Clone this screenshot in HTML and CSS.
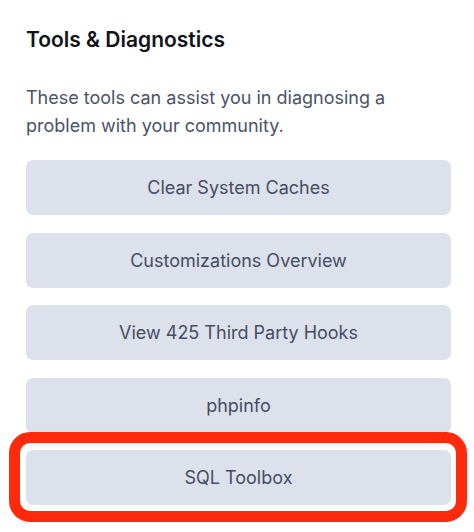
FILE: index.html
```html
<!DOCTYPE html>
<html>
<head>
<meta charset="utf-8">
<link rel="stylesheet" href="styles.css">
</head>
<body>
<section class="panel">
  <h2 class="title">Tools &amp; Diagnostics</h2>
  <p class="desc">These tools can assist you in diagnosing a problem with your community.</p>
  <div class="tools">
    <button class="tool">Clear System Caches</button>
    <button class="tool">Customizations Overview</button>
    <button class="tool">View 425 Third Party Hooks</button>
    <button class="tool">phpinfo</button>
    <div class="highlight-wrap">
      <button class="tool">SQL Toolbox</button>
      <span class="highlight"></span>
    </div>
  </div>
</section>
</body>
</html>
```
FILE: styles.css
```css
html, body {
  margin: 0;
  padding: 0;
  background: #ffffff;
}
body {
  font-family: Inter, "Noto Sans", sans-serif;
  -webkit-font-smoothing: antialiased;
  min-height: 532px;
}
.panel {
  padding: 26px 23px 27px 26px;
}
.title {
  margin: 0;
  font-size: 21px;
  line-height: 28px;
  font-weight: 600;
  color: #111318;
}
.desc {
  margin: 30px 0 0;
  font-size: 18px;
  line-height: 28px;
  color: #4a5269;
  max-width: 420px;
}
.tools {
  margin-top: 20px;
  display: flex;
  flex-direction: column;
  gap: 17.5px;
}
.tool {
  display: block;
  width: 100%;
  height: 55px;
  border: 0;
  border-radius: 7px;
  background: #dde1eb;
  color: #454d64;
  font-family: Inter, "Noto Sans", sans-serif;
  font-size: 18px;
  line-height: 55px;
  padding: 0;
  margin: 0;
}
.highlight-wrap {
  position: relative;
  height: 55px;
}
.highlight {
  position: absolute;
  top: -18px;
  left: -17px;
  right: -16px;
  bottom: -17px;
  border: 11px solid #ff2a0c;
  border-radius: 21px;
  pointer-events: none;
}
```
